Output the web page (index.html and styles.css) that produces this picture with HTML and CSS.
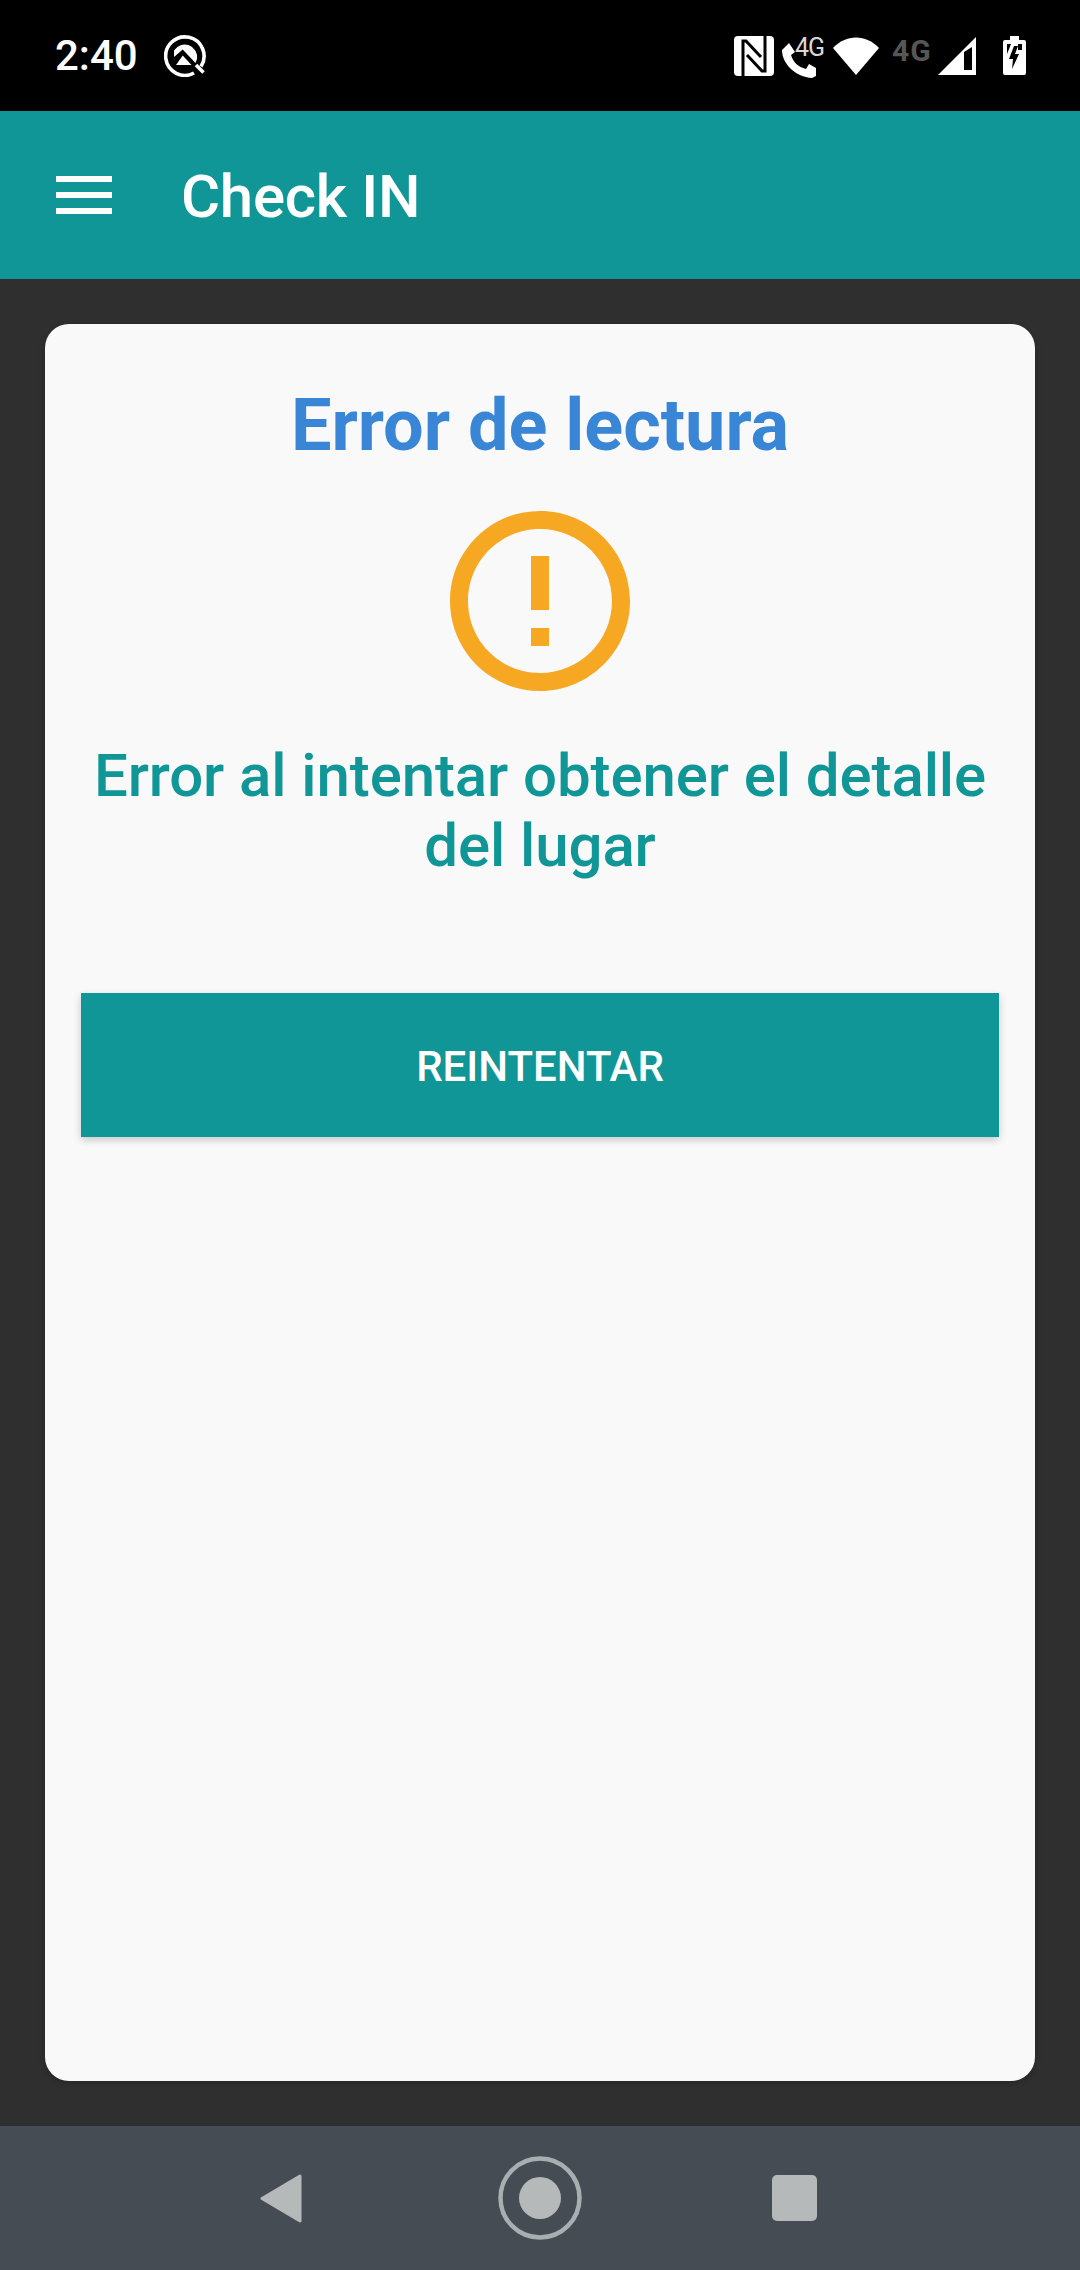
FILE: index.html
```html
<!DOCTYPE html>
<html lang="es">
<head>
    <meta charset="UTF-8">
    <meta name="viewport" content="width=device-width, initial-scale=1.0">
    <title>Check IN</title>
    <link rel="stylesheet" href="styles.css">
</head>
<body>

<!-- Barra de estado -->
<div class="status-bar">
    <div class="status-left">
        <span class="clock">2:40</span>
        <svg class="q-icon" width="42" height="42" viewBox="0 0 42 42">
            <path d="M37 31.500A19.200 19.200 0 1 0 30 38" fill="none" stroke="#fff" stroke-width="3.600"/>
            <path d="M32 30 39.500 37.500" stroke="#fff" stroke-width="3.600"/>
            <path d="M10 15.500A12.500 12.500 0 0 1 33 24L31.500 28 18.700 14.500 10 22Z" fill="#fff"/>
            <path d="M18.700 20.500 27.500 30H12Z" fill="#fff"/>
        </svg>
    </div>
    <div class="status-right">
        <svg class="nfc-icon" width="40" height="40" viewBox="0 0 40 40">
            <rect width="40" height="40" rx="4" fill="#fff"/>
            <path d="M9 40V5h3L27 21" fill="none" stroke="#000" stroke-width="3"/>
            <path d="M31 0V35h-3L13 19" fill="none" stroke="#000" stroke-width="3"/>
        </svg>
        <div class="call-icon">
            <svg width="36" height="36" viewBox="0 0 36 36">
                <path d="M1 8 8 1 14 10 10 13C12 20 17 25 25 27L28 22 35 26V34L31 36C15 35 1 22 1 8Z" fill="#fff"/>
            </svg>
            <span class="call-net">4G</span>
        </div>
        <svg class="wifi-icon" width="46" height="38" viewBox="0 0 46 38">
            <path d="M0 11C13-3 33-3 46 11L23 38Z" fill="#fff"/>
        </svg>
        <span class="net-type">4G</span>
        <svg class="signal-icon" width="38" height="38" viewBox="0 0 38 38">
            <path fill-rule="evenodd" d="M38 0V38H0ZM26 15V33H34V10Z" fill="#fff"/>
        </svg>
        <svg class="battery-icon" width="23" height="39" viewBox="0 0 23 39">
            <path fill-rule="evenodd" d="M7 0H16V4H21Q23 4 23 6V37Q23 39 21 39H2Q0 39 0 37V6Q0 4 2 4H7ZM4 8V18L8 8ZM19 8H15V14H19ZM11 10 6 23H10L9 33 16 18H12L15 10Z" fill="#fff"/>
        </svg>
    </div>
</div>

<!-- Barra superior -->
<header class="app-bar">
    <div class="menu-icon">
        <span></span>
        <span></span>
        <span></span>
    </div>
    <h1>Check IN</h1>
</header>

<main class="content">
    <div class="card">
        <h2 class="card-title">Error de lectura</h2>
        <svg class="error-icon" width="216" height="216" viewBox="0 0 24 24">
            <path d="M11 15h2v2h-2zm0-8h2v6h-2zm.99-5C6.47 2 2 6.48 2 12s4.47 10 9.99 10C17.52 22 22 17.520 22 12S17.520 2 11.990 2zM12 20c-4.420 0-8-3.580-8-8s3.580-8 8-8 8 3.580 8 8-3.580 8-8 8z" fill="#f7a823"/>
        </svg>
        <p class="card-message">Error al intentar obtener el detalle del lugar</p>
        <button class="retry-btn">REINTENTAR</button>
    </div>
</main>

<!-- Navegacion del sistema -->
<nav class="nav-bar">
    <svg width="43" height="49" viewBox="0 0 43 49">
        <path d="M41 2 3 24.500 41 47Z" fill="#b5b9ba" stroke="#b5b9ba" stroke-width="3" stroke-linejoin="round"/>
    </svg>
    <svg class="nav-home" width="84" height="84" viewBox="0 0 84 84">
        <circle cx="42" cy="42" r="39.500" fill="none" stroke="#a9aeb0" stroke-width="4.500"/>
        <circle cx="42" cy="42" r="21" fill="#b5b9ba"/>
    </svg>
    <div class="nav-square"></div>
</nav>

</body>
</html>
```

FILE: styles.css
```css
* {
    margin: 0;
    padding: 0;
    box-sizing: border-box;
}

html, body {
    width: 1080px;
    height: 2270px;
    overflow: hidden;
}

body {
    display: flex;
    flex-direction: column;
    font-family: 'Roboto', sans-serif;
    background-color: #2f2f2f;
}

.status-bar {
    height: 111px;
    background-color: #000;
    color: #fff;
    display: flex;
    align-items: center;
    justify-content: space-between;
    padding: 0 54px 0 55px;
}

.status-left, .status-right {
    display: flex;
    align-items: center;
}

.clock {
    font-size: 42px;
    font-weight: 500;
    width: 109px;
}

.status-right {
    height: 40px;
}

.call-icon {
    position: relative;
    width: 36px;
    height: 40px;
    margin-left: 6px;
}

.call-icon svg {
    position: absolute;
    left: 1px;
    top: 6px;
}

.call-net {
    position: absolute;
    left: 15px;
    top: -1px;
    font-size: 25px;
    line-height: 25px;
    letter-spacing: -1px;
    color: #d8d8d8;
    background-color: #000;
}

.wifi-icon {
    margin-left: 17px;
}

.net-type {
    margin-left: 13px;
    font-size: 30px;
    line-height: 30px;
    font-weight: 700;
    color: #565656;
    letter-spacing: 1px;
    width: 46px;
    align-self: flex-start;
}

.battery-icon {
    margin-left: 27px;
}

.app-bar {
    height: 168px;
    background-color: #109696;
    color: #fff;
    display: flex;
    align-items: center;
    padding-left: 56px;
}

.app-bar h1 {
    font-size: 60px;
    font-weight: 500;
    letter-spacing: -0.3px;
    margin-left: 69px;
    padding-top: 2px;
}

.menu-icon {
    width: 56px;
    display: flex;
    flex-direction: column;
    gap: 10px;
}

.menu-icon span {
    height: 6px;
    background-color: #fff;
}

.content {
    flex: 1;
    padding: 45px;
}

.card {
    height: 100%;
    background-color: #f9f9f9;
    border-radius: 24px;
    box-shadow: 0 2px 6px rgba(0,0,0,0.2);
    display: flex;
    flex-direction: column;
    align-items: center;
    padding: 59px 36px 0;
}

.card-title {
    font-size: 72px;
    font-weight: 700;
    line-height: 85px;
    color: #3985d6;
}

.error-icon {
    margin-top: 25px;
}

.card-message {
    margin-top: 32px;
    font-size: 60px;
    font-weight: 500;
    line-height: 70px;
    letter-spacing: -0.1px;
    color: #109696;
    text-align: center;
    width: 100%;
}

.retry-btn {
    margin-top: 112px;
    padding-top: 2px;
    width: 100%;
    height: 144px;
    border: none;
    background-color: #109696;
    color: #fff;
    font-family: 'Roboto', sans-serif;
    font-size: 42px;
    font-weight: 500;
    box-shadow: 0 3px 8px rgba(0,0,0,0.2);
}

.nav-bar {
    height: 144px;
    background-color: #454c53;
    display: flex;
    align-items: center;
    padding-left: 259px;
}

.nav-home {
    margin: 0 190px 0 196px;
}

.nav-square {
    width: 45px;
    height: 46px;
    border-radius: 5px;
    background-color: #b5b9ba;
}
```
